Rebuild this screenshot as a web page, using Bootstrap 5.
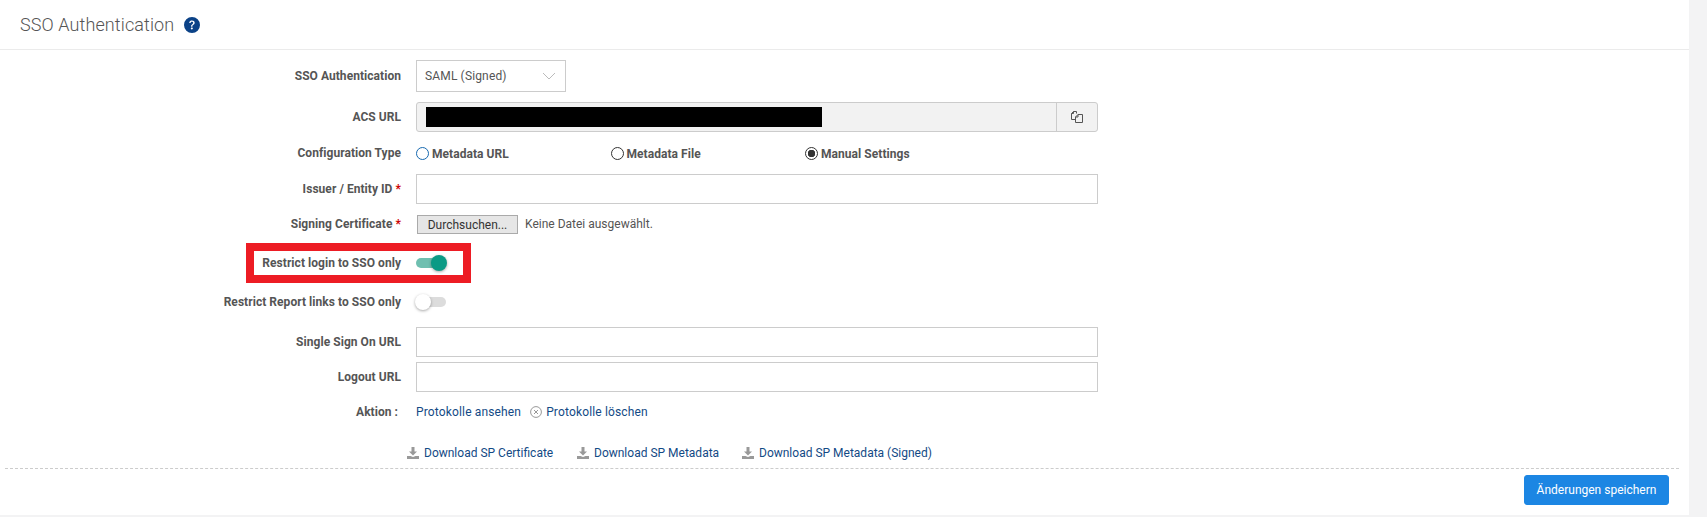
<!DOCTYPE html>
<html lang="de">
  <head>
    <meta charset="UTF-8" />
    <title>SSO Authentication</title>
    <link rel="stylesheet" href="https://cdn.jsdelivr.net/npm/bootstrap@5.3.0/dist/css/bootstrap.min.css" />
    <style>
      body { background: #f3f3f4; font-family: Roboto, "Liberation Sans", sans-serif; font-size: 12px; letter-spacing: .15px; color: #555; height: 517px; overflow: hidden; }
      .sso-panel { width: 1689px; height: 515px; background: #fff; }
      .sso-head { height: 50px; padding-left: 20px; border-bottom: 1px solid #ebebeb; }
      .sso-title { font-size: 18px; font-weight: 300; color: #555; margin: 0; letter-spacing: .1px; }
      .sso-help { width: 16px; height: 16px; margin-left: 10px; fill: #0b4287; }
      .sso-body { padding-top: 10px; height: 418px; }
      .sso-row { display: flex; align-items: center; }
      .sso-label { width: 401px; text-align: right; font-weight: 700; color: #555; margin-right: 15px; letter-spacing: .05px; flex: none; }
      .sso-label-action { padding-right: 3px; }
      .sso-req { color: #c00; }
      .sso-field { width: 682px; flex: none; }
      .sso-input { height: 30px; border: 1px solid #ccc; border-radius: 0; background: #fff; }
      .sso-select { width: 150px; height: 32px; border: 1px solid #ccc; border-radius: 0; font-size: 12px; letter-spacing: .15px; color: #555; padding: 0 8px; background-position: right 9px center; background-size: 14px 10px; background-image: url("data:image/svg+xml,%3csvg xmlns='http://www.w3.org/2000/svg' viewBox='0 0 14 10'%3e%3cpath fill='none' stroke='%23aaa' stroke-width='.8' d='M1 2l6 6 6-6'/%3e%3c/svg%3e"); }
      .sso-acs { height: 30px; background: #f2f2f2; border: 1px solid #ccc; border-radius: 3px; }
      .sso-mask { width: 396px; height: 20px; background: #000; margin-left: 9px; }
      .sso-copy { width: 41px; border-left: 1px solid #ccc; }
      .sso-radio-col { width: 194.5px; font-weight: 700; letter-spacing: .05px; }
      .sso-radio-text { padding-top: 2px; }
      .sso-radio { width: 13px; height: 13px; border-radius: 50%; border: 1px solid #333; margin-right: 3px; flex: none; background: #fff; }
      .sso-radio-blue { border-color: #1769b0; }
      .sso-radio-on { background: radial-gradient(circle, #333 0 3.5px, #fff 4px); }
      .sso-browse { height: 19px; width: 101px; margin-left: 1px; border: 1px solid #aaa; background: #e6e6e6; color: #333; font-size: 12px; padding: 0; border-radius: 0; }
      .sso-nofile { margin-left: 7px; letter-spacing: 0; }
      .sso-switch { position: relative; display: block; width: 30px; height: 10px; border-radius: 5px; background: #dcdcdc; }
      .sso-switch::after { content: ""; position: absolute; top: -3px; left: -1px; width: 16px; height: 16px; border-radius: 50%; background: #fff; box-shadow: 0 1px 3px rgba(0,0,0,.35); }
      .sso-switch-on { background: #6fbfb0; }
      .sso-switch-on::after { left: 15px; background: #0b9a85; }
      .sso-redbox { position: absolute; left: 246px; top: 0; width: 225px; height: 40px; border: 8px solid #ed1c24; pointer-events: none; }
      .sso-link { color: #134a85; text-decoration: none; }
      .sso-clear-icon { margin-left: 9px; margin-right: 4px; }
      .sso-dl { padding-left: 407px; height: 14px; letter-spacing: 0; }
      .sso-dl-item { display: inline-flex; align-items: center; }
      .sso-dl-cert { width: 170px; }
      .sso-dl-meta { width: 165px; }
      .sso-dl-icon { width: 12px; height: 12px; margin-right: 5px; fill: #999; }
      .sso-foot { margin: 0 10px 0 5px; border-top: 1px dashed #ccc; padding: 6px 10px 0 0; }
      .sso-save { width: 145px; height: 30px; background: #1c86e3; border: 1px solid #1c86e3; color: #fff; font-size: 12px; padding: 0; border-radius: 3px; }
      .sso-gap-5 { margin-top: 5px; }
      .sso-gap-9 { margin-top: 9px; }
      .sso-gap-10 { margin-top: 10px; }
      .sso-gap-12 { margin-top: 12px; }
      .sso-gap-15 { margin-top: 15px; }
      .sso-gap-26 { margin-top: 26px; }
      .sso-h-16 { height: 16px; }
      .sso-h-20 { height: 20px; }
      .sso-h-40 { height: 40px; }
      .sso-h-42 { height: 42px; }
    </style>
  </head>
  <body>
    <div class="sso-panel">
      <div class="sso-head d-flex align-items-center">
        <h2 class="sso-title">SSO Authentication</h2>
        <svg class="sso-help" viewBox="0 0 16 16"><path d="M16 8A8 8 0 1 1 0 8a8 8 0 0 1 16 0zM5.496 6.033h.825c.138 0 .248-.113.266-.25.09-.656.54-1.134 1.342-1.134.686 0 1.314.343 1.314 1.168 0 .635-.374.927-.965 1.371-.673.489-1.206 1.06-1.168 1.987l.003.217a.25.25 0 0 0 .25.246h.811a.25.25 0 0 0 .25-.25v-.105c0-.718.273-.927 1.01-1.486.609-.463 1.244-.977 1.244-2.056 0-1.511-1.276-2.241-2.673-2.241-1.267 0-2.655.59-2.75 2.286a.237.237 0 0 0 .241.247zm2.325 6.443c.61 0 1.029-.394 1.029-.927 0-.552-.42-.94-1.029-.94-.584 0-1.009.388-1.009.94 0 .533.425.927 1.01.927z"/></svg>
      </div>

      <div class="sso-body">
        <div class="sso-row">
          <div class="sso-label">SSO Authentication</div>
          <select class="form-select sso-select"><option>SAML (Signed)</option></select>
        </div>

        <div class="sso-row sso-gap-10">
          <div class="sso-label">ACS URL</div>
          <div class="sso-field sso-acs d-flex align-items-center justify-content-between">
            <div class="sso-mask"></div>
            <div class="sso-copy h-100 d-flex align-items-center justify-content-center">
              <svg width="14" height="14" viewBox="0 0 14 14" fill="none" stroke="#555"><path d="M6.5 3.5V1.5H3.5L1.5 3.5V9.5H5.5"/><path d="M1.5 3.5H3.5V1.5"/><path d="M8 4.5H12.5V12.5H5.5V7Z"/><path d="M8 4.5V7H5.5"/></svg>
            </div>
          </div>
        </div>

        <div class="sso-row sso-h-42">
          <div class="sso-label">Configuration Type</div>
          <div class="d-flex">
            <div class="sso-radio-col d-flex align-items-center"><span class="sso-radio sso-radio-blue"></span><span class="sso-radio-text">Metadata URL</span></div>
            <div class="sso-radio-col d-flex align-items-center"><span class="sso-radio"></span><span class="sso-radio-text">Metadata File</span></div>
            <div class="sso-radio-col d-flex align-items-center"><span class="sso-radio sso-radio-on"></span><span class="sso-radio-text">Manual Settings</span></div>
          </div>
        </div>

        <div class="sso-row">
          <div class="sso-label">Issuer / Entity ID <span class="sso-req">*</span></div>
          <div class="sso-field sso-input"></div>
        </div>

        <div class="sso-row sso-gap-10 sso-h-20">
          <div class="sso-label">Signing Certificate <span class="sso-req">*</span></div>
          <button type="button" class="btn sso-browse">Durchsuchen...</button>
          <span class="sso-nofile">Keine Datei ausgewählt.</span>
        </div>

        <div class="sso-row position-relative sso-gap-9 sso-h-40">
          <div class="sso-label">Restrict login to SSO only</div>
          <span class="sso-switch sso-switch-on"></span>
          <div class="sso-redbox"></div>
        </div>

        <div class="sso-row sso-gap-9 sso-h-20">
          <div class="sso-label">Restrict Report links to SSO only</div>
          <span class="sso-switch"></span>
        </div>

        <div class="sso-row sso-gap-15">
          <div class="sso-label">Single Sign On URL</div>
          <div class="sso-field sso-input"></div>
        </div>

        <div class="sso-row sso-gap-5">
          <div class="sso-label">Logout URL</div>
          <div class="sso-field sso-input"></div>
        </div>

        <div class="sso-row sso-gap-12 sso-h-16">
          <div class="sso-label sso-label-action">Aktion :</div>
          <a class="sso-link" href="#">Protokolle ansehen</a>
          <svg class="sso-clear-icon" width="12" height="12" viewBox="0 0 12 12" fill="none" stroke="#999"><circle cx="6" cy="6" r="5.4"/><path d="M4 4l4 4M8 4l-4 4"/></svg>
          <a class="sso-link" href="#">Protokolle löschen</a>
        </div>

        <div class="sso-dl d-flex sso-gap-26">
          <a class="sso-link sso-dl-item sso-dl-cert" href="#"><svg class="sso-dl-icon" viewBox="0 0 12 12"><path d="M4.5 0h3v4.5H10L6 8.5 2 4.5h2.5zM0 9h3.5L6 10l2.5-1H12v3H0z"/></svg>Download SP Certificate</a>
          <a class="sso-link sso-dl-item sso-dl-meta" href="#"><svg class="sso-dl-icon" viewBox="0 0 12 12"><path d="M4.5 0h3v4.5H10L6 8.5 2 4.5h2.5zM0 9h3.5L6 10l2.5-1H12v3H0z"/></svg>Download SP Metadata</a>
          <a class="sso-link sso-dl-item" href="#"><svg class="sso-dl-icon" viewBox="0 0 12 12"><path d="M4.5 0h3v4.5H10L6 8.5 2 4.5h2.5zM0 9h3.5L6 10l2.5-1H12v3H0z"/></svg>Download SP Metadata (Signed)</a>
        </div>
      </div>

      <div class="sso-foot d-flex justify-content-end">
        <button type="button" class="btn sso-save">Änderungen speichern</button>
      </div>
    </div>
  </body>
</html>
